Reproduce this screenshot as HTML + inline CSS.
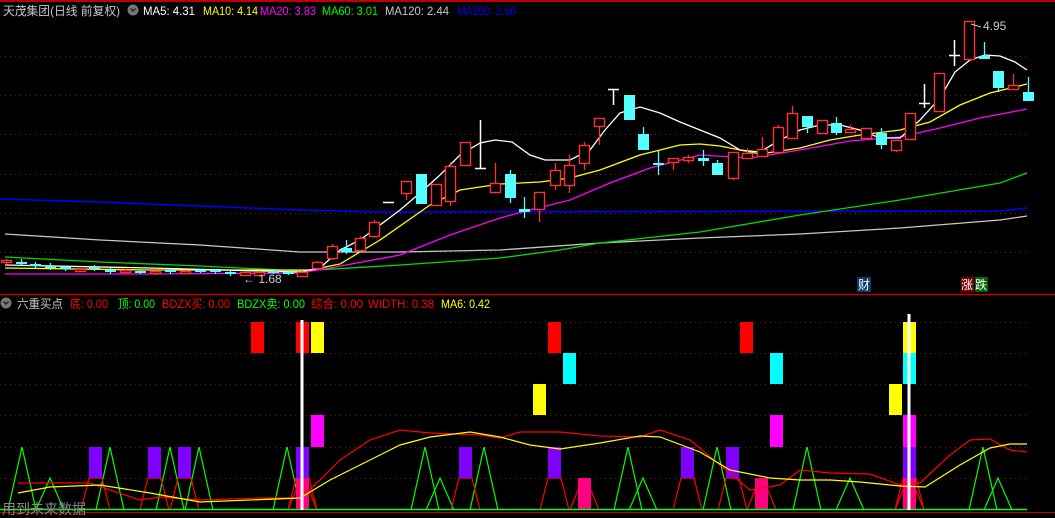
<!DOCTYPE html>
<html><head><meta charset="utf-8">
<style>
html,body{margin:0;padding:0;background:#000;}
body{width:1055px;height:518px;overflow:hidden;position:relative;font-family:"Liberation Sans","Noto Sans CJK SC",sans-serif;}
svg{position:absolute;left:0;top:0;}
svg text{font-family:"Liberation Sans","Noto Sans CJK SC",sans-serif;font-size:12px;}
</style></head><body>
<svg id="s" width="1055" height="518" xmlns="http://www.w3.org/2000/svg">
<rect width="1055" height="518" fill="#000"/>
<line x1="0" y1="1" x2="1055" y2="1" stroke="#c00000" stroke-width="2"/>
<line x1="0" y1="294.5" x2="1055" y2="294.5" stroke="#c00000" stroke-width="1.5"/>
<line x1="0" y1="512.5" x2="1055" y2="512.5" stroke="#c00000" stroke-width="1"/>
<g id="grid" stroke="#8a1010" stroke-width="1" stroke-dasharray="1,4"></g>
<g id="main"></g>
<g id="low"></g>
<!-- header -->
<text x="3" y="15" fill="#c8c8c8" textLength="117" lengthAdjust="spacingAndGlyphs">天茂集团(日线 前复权)</text>
<circle cx="133" cy="10" r="5.5" fill="#777"/>
<path d="M130.5 8.5 L133 11 L135.5 8.5" stroke="#222" stroke-width="1.4" fill="none"/>
<text x="143" y="15" fill="#fff" textLength="52" lengthAdjust="spacingAndGlyphs">MA5: 4.31</text>
<text x="203" y="15" fill="#ffff00" textLength="55" lengthAdjust="spacingAndGlyphs">MA10: 4.14</text>
<text x="260" y="15" fill="#ff00ff" textLength="56" lengthAdjust="spacingAndGlyphs">MA20: 3.83</text>
<text x="322" y="15" fill="#00ff00" textLength="56" lengthAdjust="spacingAndGlyphs">MA60: 3.01</text>
<text x="385" y="15" fill="#c8c8c8" textLength="64" lengthAdjust="spacingAndGlyphs">MA120: 2.44</text>
<text x="457" y="15" fill="#0000ff" textLength="59" lengthAdjust="spacingAndGlyphs">MA250: 2.56</text>
<circle cx="6" cy="303" r="5.5" fill="#777"/>
<path d="M3.5 301.5 L6 304 L8.5 301.5" stroke="#222" stroke-width="1.4" fill="none"/>
<text x="17" y="308" fill="#c8c8c8" textLength="46" lengthAdjust="spacingAndGlyphs">六重买点</text>
<text x="70" y="308" fill="#ff0000" textLength="38" lengthAdjust="spacingAndGlyphs">底: 0.00</text>
<text x="118" y="308" fill="#00ff00" textLength="37" lengthAdjust="spacingAndGlyphs">顶: 0.00</text>
<text x="162" y="308" fill="#ff0000" textLength="68" lengthAdjust="spacingAndGlyphs">BDZX买: 0.00</text>
<text x="237" y="308" fill="#00ff00" textLength="68" lengthAdjust="spacingAndGlyphs">BDZX卖: 0.00</text>
<text x="311" y="308" fill="#ff0000" textLength="52" lengthAdjust="spacingAndGlyphs">综合: 0.00</text>
<text x="368" y="308" fill="#ff0000" textLength="66" lengthAdjust="spacingAndGlyphs">WIDTH: 0.38</text>
<text x="441" y="308" fill="#ffff00" textLength="49" lengthAdjust="spacingAndGlyphs">MA6: 0.42</text>
<text x="243" y="283" fill="#c8c8c8" style="font-size:12px">← 1.68</text>
<text x="983" y="30" fill="#c8c8c8" style="font-size:12px">4.95</text>
<path d="M971 24 L981 27" stroke="#c8c8c8"/>
<rect x="857" y="277" width="14" height="15" fill="#103a6a"/>
<text x="858" y="289" fill="#fff" style="font-size:12px">财</text>
<rect x="961" y="277" width="13" height="15" fill="#7a0000"/>
<text x="961" y="289" fill="#fff" style="font-size:12px">涨</text>
<rect x="975" y="277" width="13" height="15" fill="#006600"/>
<text x="975" y="289" fill="#fff" style="font-size:12px">跌</text>
<text x="2" y="514" fill="#8a8a8a" style="font-size:14px">用到未来数据</text>
</svg>
<script>
var NS="http://www.w3.org/2000/svg";
function el(p,t,a){var e=document.createElementNS(NS,t);for(var k in a)e.setAttribute(k,a[k]);document.getElementById(p).appendChild(e);return e;}
[56,95,134,174,213,252,322,353,384,415,447,478].forEach(function(y){el('grid','line',{x1:0,y1:y+.5,x2:1030,y2:y+.5});});
function pl(g,pts,c,w){el(g,'polyline',{points:pts.map(function(p){return p.join(',')}).join(' '),fill:'none',stroke:c,'stroke-width':w||1.3});}
pl('main',[[0,199],[100,202],[200,206],[300,210],[380,212],[1000,211],[1027,208]],'#0000ff',1.5);
pl('main',[[5,234],[100,240],[200,245],[300,252],[400,252],[500,250],[600,243],[700,238],[800,234],[900,228],[1000,220],[1027,216]],'#c8c8c8');
pl('main',[[5,257],[100,262],[200,266],[300,271],[400,265],[500,258],[560,250],[600,243],[700,232],[800,215],[900,200],[1000,183],[1027,173]],'#00dd00');
pl('main',[[5,274],[150,274],[300,273],[330,268],[400,255],[450,235],[500,218],[530,210],[570,200],[610,183],[650,168],[700,155],[750,158],[800,150],[850,141],[900,137],[940,128],[980,118],[1027,109]],'#ff00ff');
pl('main',[[5,268],[150,270],[310,270],[340,264],[380,240],[430,205],[460,190],[500,184],[540,182],[570,178],[600,170],[640,155],[680,145],[700,144],[720,146],[740,150],[760,154],[800,148],[830,140],[860,135],[900,130],[930,122],[960,105],[990,93],[1027,84]],'#ffff00');
pl('main',[[5,265],[150,268],[300,272],[320,268],[340,250],[360,240],[380,225],[400,210],[420,193],[440,175],[460,155],[480,143],[495,140],[512,142],[530,155],[545,160],[570,160],[590,150],[605,130],[620,113],[640,107],[660,113],[680,122],[700,130],[720,138],[740,150],[760,152],[780,140],[800,130],[820,125],[840,125],[860,130],[880,138],[900,138],[920,120],[940,98],[955,72],[970,60],[985,55],[1000,56],[1015,62],[1027,70]],'#ffffff');
var C=[[6,260,262,259,264,'r'],[21,262,264,259,266,'c'],[35,264,266,262,268,'c'],[50,266,268,263,270,'c'],[65,267,269,266,271,'c'],[80,269,271,268,272,'r'],[94,267,269,265,271,'c'],[110,270,272,268,274,'c'],[125,270,272,269,273,'r'],[140,271,273,270,274,'c'],[155,271,273,270,275,'r'],[170,270,272,269,274,'c'],[185,271,273,270,274,'r'],[200,270,272,269,273,'c'],[215,270,272,269,274,'c'],[230,272,274,271,276,'c'],[245,272,275,271,276,'r'],[259,272,275,271,276,'r'],[273,271,273,270,274,'c'],[288,272,274,271,275,'c'],[302,272,276,271,277,'r'],[317,262,268,261,270,'r'],[332,246,258,244,260,'r'],[346,248,252,240,254,'c'],[360,238,250,236,252,'r'],[374,222,236,220,238,'r'],[388,202,203,202,203,'w'],[406,181,193,181,200,'r'],[421,174,204,174,204,'c'],[436,184,205,184,205,'r'],[450,166,201,162,206,'r'],[465,142,165,142,165,'r'],[480,168,169,120,169,'w'],[495,183,192,163,192,'r'],[510,174,198,170,203,'c'],[524,209,212,197,218,'c'],[539,192,209,192,222,'r'],[555,170,185,163,190,'r'],[569,165,185,155,193,'r'],[584,145,163,142,170,'r'],[599,118,126,118,145,'r'],[613,89,90,89,105,'w'],[629,95,120,95,120,'c'],[643,134,150,127,150,'c'],[658,163,165,151,175,'c'],[673,158,162,158,170,'r'],[688,157,160,155,163,'r'],[703,158,161,150,166,'c'],[717,163,175,160,175,'c'],[733,152,178,152,180,'r'],[747,153,158,148,158,'r'],[762,149,156,137,156,'r'],[778,127,152,125,152,'r'],[792,113,138,106,138,'r'],[807,116,127,116,133,'c'],[822,120,133,120,133,'r'],[836,123,133,117,135,'c'],[850,129,132,125,132,'r'],[866,128,138,128,138,'r'],[881,133,145,128,149,'c'],[896,140,150,140,152,'r'],[910,113,139,113,139,'r'],[924,103,104,84,108,'w'],[939,73,111,73,111,'r'],[954,55,56,40,66,'w'],[969,21,59,21,59,'r'],[984,56,59,42,59,'c'],[998,71,88,71,92,'c'],[1013,85,89,74,89,'r'],[1028,92,101,77,101,'c']];
C.forEach(function(c){var x=c[0],t=c[1],b=c[2],h=c[3],l=c[4],k=c[5];
 if(k=='w'){el('main','line',{x1:x+.5,y1:h,x2:x+.5,y2:l,stroke:'#fff','stroke-width':1.5});el('main','line',{x1:x-5,y1:t+.5,x2:x+6,y2:t+.5,stroke:'#fff','stroke-width':1.5});return;}
 var col=k=='r'?'#ff3030':'#55ffff';
 el('main','line',{x1:x+.5,y1:h,x2:x+.5,y2:l,stroke:col,'stroke-width':1.3});
 if(k=='r'){el('main','rect',{x:x-4.5,y:t+.5,width:10,height:Math.max(b-t,1.5),fill:'#000',stroke:col,'stroke-width':1.4});}
 else el('main','rect',{x:x-5,y:t,width:11,height:Math.max(b-t,2),fill:col});
});
function tri(x,peak,col,hw){pl('low',[[x-hw,510],[x,peak],[x+hw,510]],col,1.2);}
[[22,447],[50,478],[110,447],[170,447],[199,447],[287,447],[425,447],[440,478],[484,447],[628,447],[643,478],[717,447],[807,447],[850,478],[983,447],[998,478]].forEach(function(p){tri(p[0],p[1],'#00ff00',14);});
var R=[322,353,384,415,447,478],H=[31,31,31,32,31,32];
var B=[[251,0,'#ff0000'],[296,0,'#ff0000'],[311,0,'#ffff00'],[548,0,'#ff0000'],[740,0,'#ff0000'],[903,0,'#ffff00'],
[563,1,'#00ffff'],[770,1,'#00ffff'],[903,1,'#00ffff'],
[533,2,'#ffff00'],[889,2,'#ffff00'],
[311,3,'#ff00ff'],[770,3,'#ff00ff'],[903,3,'#ff00ff'],
[89,4,'#8000ff'],[148,4,'#8000ff'],[178,4,'#8000ff'],[296,4,'#8000ff'],[459,4,'#8000ff'],[548,4,'#8000ff'],[681,4,'#8000ff'],[726,4,'#8000ff'],[903,4,'#8000ff'],
[296,5,'#ff0080'],[578,5,'#ff0080'],[755,5,'#ff0080'],[903,5,'#ff0080']];
B.forEach(function(b){if(b[1]>=4){var x=b[0];pl('low',[[x-8,510],[x,R[b[1]]+(b[1]==5?12:31)],[x+13,R[b[1]]+(b[1]==5?12:31)],[x+21,510]],'#ff0000',1.2);}});
B.forEach(function(b){el('low','rect',{x:b[0],y:R[b[1]],width:13,height:H[b[1]],fill:b[2]});});
pl('low',[[18,483],[90,483],[110,490],[140,500],[160,497],[200,500],[260,498],[300,498],[320,480],[340,460],[370,440],[400,430],[430,433],[480,435],[500,438],[520,432],[560,432],[600,436],[640,437],[660,430],[690,440],[720,465],[750,490],[780,485],[800,470],[830,473],[870,474],[900,485],[920,483],[950,455],[970,440],[990,439],[1010,450],[1027,452]],'#ff0000',1.2);
pl('low',[[18,493],[50,487],[100,485],[150,493],[200,502],[300,498],[330,480],[360,465],[400,445],[430,437],[470,432],[500,437],[530,445],[560,449],[600,443],[640,436],[660,437],[700,452],[730,470],[770,478],[800,480],[830,480],[860,482],[880,484],[900,486],[925,487],[960,465],[990,448],[1010,444],[1027,444]],'#ffff00',1.2);
el('low','line',{x1:0,y1:509.5,x2:1027,y2:509.5,stroke:'#00ff00','stroke-width':1.5});
el('low','rect',{x:300.5,y:320,width:3,height:190,fill:'#fff'});
el('low','rect',{x:907.5,y:314,width:3,height:196,fill:'#fff'});
</script>
</body></html>
